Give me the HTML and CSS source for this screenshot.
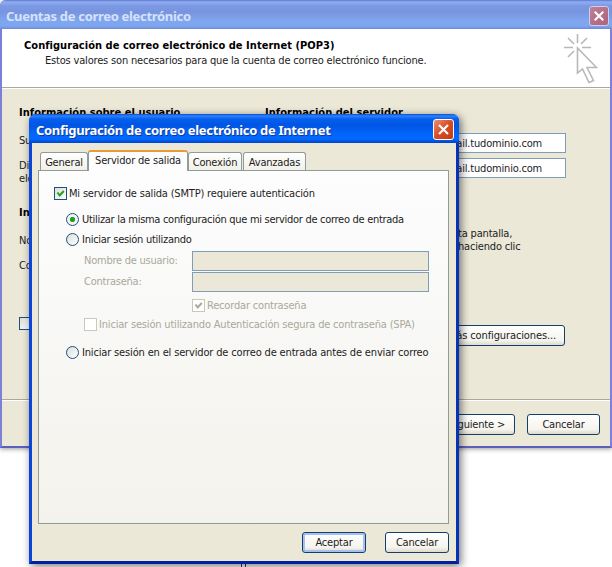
FILE: index.html
```html
<!DOCTYPE html>
<html lang="es">
<head>
<meta charset="utf-8">
<title>Cuentas de correo electrónico</title>
<link rel="stylesheet" href="styles.css">
</head>
<body>
<div class="desktop">
  <section class="window accounts">
    <header class="titlebar">
      <span class="title">Cuentas de correo electrónico</span>
      <span class="close"><svg viewBox="0 0 19 19"><path d="M5 5l9 9M14 5l-9 9"/></svg></span>
    </header>
    <div class="banner">
      <div class="banner-text">
        <h1>Configuración de correo electrónico de Internet (POP3)</h1>
        <p>Estos valores son necesarios para que la cuenta de correo electrónico funcione.</p>
      </div>
      <svg class="pointer" viewBox="0 0 34 50"><path d="M13.500 0v9M0 13.500h9M18 13.500h9M4 4l6 6M23 4l-6 6M4 23l6-6M13.500 14v25l5-4 6.500 13.500 4.500-2L23 33.500h9.500z"/></svg>
    </div>
    <div class="account-body">
      <div class="column user">
        <h2>Información sobre el usuario</h2>
        <p class="row name">Su</p>
        <p class="row mail">Dir<br>ele</p>
        <h2 class="login">In</h2>
        <p class="row">No</p>
        <p class="row second">Co</p>
        <span class="check"></span>
      </div>
      <div class="column server">
        <h2>Información del servidor</h2>
        <div class="field first"><span>mail.tudominio.com</span></div>
        <div class="field"><span>mail.tudominio.com</span></div>
        <p class="note">ta pantalla,<br>haciendo clic</p>
        <div class="button more"><span>Más configuraciones...</span></div>
      </div>
    </div>
    <footer class="wizard">
      <div class="button next"><span>Siguiente &gt;</span></div>
      <div class="button cancel"><span>Cancelar</span></div>
    </footer>
  </section>
  <div class="caret"></div>
  <section class="window dialog">
    <header class="titlebar">
      <span class="title">Configuración de correo electrónico de Internet</span>
      <span class="close"><svg viewBox="0 0 19 19"><path d="M5 5l9 9M14 5l-9 9"/></svg></span>
    </header>
    <div class="dialog-body">
      <nav class="tabs">
        <span class="tab general">General</span>
        <span class="tab active">Servidor de salida</span>
        <span class="tab connection">Conexión</span>
        <span class="tab advanced">Avanzadas</span>
      </nav>
      <div class="panel">
        <div class="option auth"><span class="check"><svg viewBox="0 0 11 11"><path d="M2.500 4.500l2.200 3L8.800 3"/></svg></span><span>Mi servidor de salida (SMTP) requiere autenticación</span></div>
        <div class="option same"><span class="radio on"></span><span>Utilizar la misma configuración que mi servidor de correo de entrada</span></div>
        <div class="option login"><span class="radio"></span><span>Iniciar sesión utilizando</span></div>
        <div class="credential"><span class="label">Nombre de usuario:</span><span class="input"></span></div>
        <div class="credential"><span class="label">Contraseña:</span><span class="input"></span></div>
        <div class="option remember off"><span class="check"><svg viewBox="0 0 11 11"><path d="M2.500 4.500l2.200 3L8.800 3"/></svg></span><span>Recordar contraseña</span></div>
        <div class="option spa off"><span class="check"></span><span>Iniciar sesión utilizando Autenticación segura de contraseña (SPA)</span></div>
        <div class="option before"><span class="radio"></span><span>Iniciar sesión en el servidor de correo de entrada antes de enviar correo</span></div>
      </div>
      <footer class="actions">
        <div class="button default"><span>Aceptar</span></div>
        <div class="button"><span>Cancelar</span></div>
      </footer>
    </div>
  </section>
</div>
</body>
</html>
```
FILE: styles.css
```css
* { box-sizing: border-box; }
body { margin: 0; background: #fff; }
h1, h2, p { margin: 0; font-size: 11px; }
.desktop {
  position: relative; width: 612px; height: 567px; overflow: hidden; background: #fff;
  font: 11px/13px "DejaVu Sans Condensed", "DejaVu Sans", sans-serif;
  font-stretch: condensed; color: #1c1c22; white-space: nowrap; letter-spacing: -0.18px;
}
.window { position: absolute; display: flex; flex-direction: column; background: #ebe8d8; }
.accounts {
  left: 0; top: 0; width: 612px; height: 448px;
  border: solid #7b80d9; border-width: 0 2px 2px; border-bottom-color: #5c60bd;
  box-shadow: 0 1px 5px #999; border-radius: 6px 0 0 0;
}
.titlebar { display: flex; align-items: center; justify-content: space-between; flex: none; height: 29px; }
.title { font: bold 13px/18px "Noto Sans", sans-serif; letter-spacing: -0.31px; }
.accounts .titlebar {
  margin: 0 -2px; padding: 2px 3px 0 6px; border-radius: 6px 0 0 0; color: #d6e2fb;
  background: linear-gradient(#5c79d2 0, #90adf0 2px, #7b98e2 6px, #7894df 12px, #7fa6ef 21px, #7da7ee 26px, #7288dc 29px);
}
.close {
  width: 20px; height: 20px; border: 1px solid #c8d1f1; border-radius: 3px;
  background: linear-gradient(135deg, #c07f95, #ad6279);
}
.close svg { display: block; width: 18px; height: 18px; fill: none; stroke: #fff; stroke-width: 2.2; }
.banner { display: flex; justify-content: space-between; height: 58px; padding: 5px 12px 0 22px; background: #fff; }
.banner-text { padding-top: 5px; }
.banner-text p { padding: 2px 0 0 21px; }
h1, h2 { line-height: 13px; color: #000; letter-spacing: 0.04px; }
.pointer { width: 34px; height: 50px; fill: none; stroke: #b8b8b8; stroke-width: 1.6; }
.account-body { display: flex; height: 312px; border-top: 1px solid #aaa89b; box-shadow: inset 0 1px #fff; padding: 18px 0 0 17px; }
.column { display: flex; flex-direction: column; }
.user { width: 246px; }
.row.name { margin-top: 15px; }
.row.mail { margin-top: 12px; }
.user h2.login { margin-top: 21px; }
.user h2.login + .row { margin-top: 15px; }
.row.second { margin-top: 12px; }
.user .check { margin-top: 45px; }
.server { width: 301px; }
.field { display: flex; align-items: center; justify-content: flex-end; height: 20px; margin-top: 5px; padding-right: 23px; border: 1px solid #7f9db9; background: #fff; }
.field.first { margin-top: 14px; }
.note { margin-top: 49px; padding-left: 193px; }
.button {
  display: flex; align-items: center; justify-content: center; width: 64px; height: 21px;
  border: 1px solid #123f6d; border-radius: 3px; background: linear-gradient(#fff, #f5f4ee 75%, #dedacb);
}
.button.more { width: 130px; margin: 72px 1px 0 auto; padding-right: 8px; justify-content: flex-end; letter-spacing: -0.12px; }
.wizard { display: flex; justify-content: flex-end; gap: 12px; height: 47px; border-top: 1px solid #aaa89b; box-shadow: inset 0 1px #fff; padding: 14px 10px 0; }
.button.next { width: 80px; padding-left: 4px; }
.button.cancel { width: 73px; }
.caret { position: absolute; left: 241px; top: 560px; width: 5px; height: 7px; border: solid #1c3d83; border-width: 0 1px; }
.dialog {
  left: 29px; top: 114px; width: 430px; height: 450px;
  border: solid #0845d8; border-width: 0 3px 3px; border-right-color: #0633b5; border-bottom-color: #031f9b;
  border-radius: 7px 7px 0 0; box-shadow: 2px 2px 8px rgba(0,0,0,.55);
}
.dialog .titlebar {
  margin: 0 -3px; padding: 2px 5px 0 7px; border-radius: 7px 7px 0 0; color: #fff;
  background: linear-gradient(#0a4ad0 0, #2b83fb 2px, #0660ed 5px, #0055e3 11px, #0265fb 20px, #0168ff 25px, #0142c4 29px);
}
.dialog .title { text-shadow: 1px 1px #113a9b; }
.dialog .close { width: 21px; height: 21px; border-color: #fff; background: linear-gradient(135deg, #ee8d70, #d84c25 50%, #c63b10); }
.dialog .close svg { width: 19px; height: 19px; }
.dialog-body { display: flex; flex-direction: column; padding: 7px 7px 0 6px; }
.tabs { display: flex; align-items: flex-end; height: 20px; padding-left: 2px; }
.tab {
  display: flex; align-items: center; justify-content: center; height: 18px; padding-top: 2px;
  border: 1px solid #919b9c; border-bottom: 0; border-radius: 3px 3px 0 0; background: linear-gradient(#fff, #f1f0e8);
}
.general { width: 48px; }
.active { width: 100px; height: 21px; margin-bottom: -1px; padding: 0 0 2px; border-top: 2px solid #eb9a35; background: #fdfdfd; z-index: 1; }
.connection { width: 54px; }
.advanced { width: 63px; margin-left: 1px; }
.panel { width: 411px; height: 354px; padding: 16px 19px 0 15px; border: 1px solid #919b9c; background: linear-gradient(#fdfdfe, #f3f2ec); }
.option { display: flex; align-items: center; height: 13px; gap: 2px; }
.check { display: block; flex: none; width: 13px; height: 13px; border: 1px solid #1c5180; background: linear-gradient(135deg, #dcdcd7, #fff); }
.check svg { display: block; width: 11px; height: 11px; fill: none; stroke: #21a121; stroke-width: 2; }
.radio { flex: none; width: 13px; height: 13px; border: 1px solid #1c5180; border-radius: 50%; background: linear-gradient(135deg, #dcdcd7, #fff); }
.radio.on { background: radial-gradient(circle, #21a121 0 2.2px, #f1f3f0 3px); }
.same, .login.option, .before { margin-left: 12px; gap: 3px; }
.same { margin-top: 13px; letter-spacing: -0.29px; }
.login.option { margin-top: 7px; letter-spacing: -0.27px; }
.credential { display: flex; align-items: center; height: 20px; margin-top: 1px; padding-left: 30px; color: #aaa89a; letter-spacing: -0.24px; }
.login + .credential { margin-top: 5px; }
.label { width: 108px; padding-bottom: 2px; }
.input { width: 237px; height: 20px; border: 1px solid #7f9db9; background: #ebe8d8; }
.off { color: #aaa89a; }
.off .check { border-color: #cac8bb; background: #fff; }
.off .check svg { stroke: #aaa89a; }
.remember { margin: 7px 0 0 138px; }
.spa { margin: 6px 0 0 30px; }
.before { margin-top: 15px; letter-spacing: -0.16px; }
.actions { display: flex; justify-content: flex-end; gap: 19px; padding-top: 8px; }
.default { box-shadow: inset 0 0 0 2px #a8c0ef; }
```
